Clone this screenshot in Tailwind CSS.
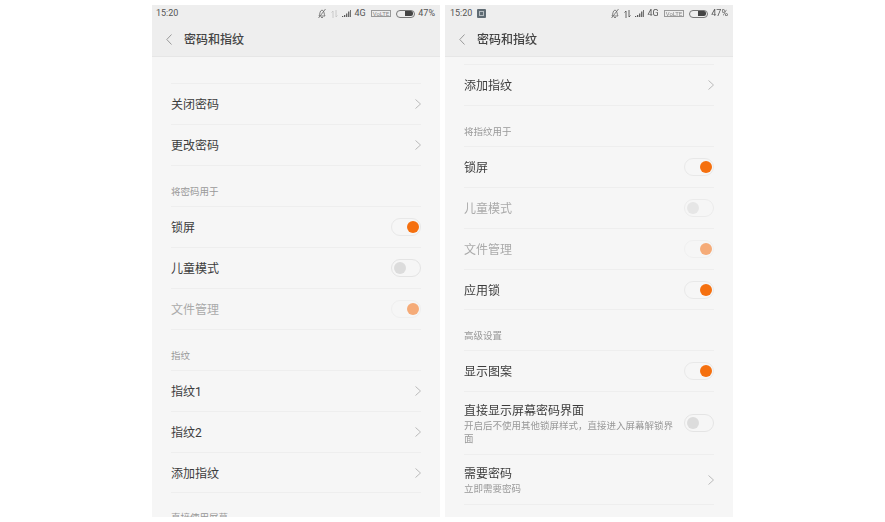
<!DOCTYPE html>
<html lang="en">
<head>
  <meta charset="UTF-8" />
  <meta name="viewport" content="width=device-width, initial-scale=1" />
  <title>密码和指纹</title>
  <script src="https://cdn.jsdelivr.net/npm/@tailwindcss/browser@4"></script>
</head>
<body class="bg-white text-[#3c3c3c] font-['Roboto','Noto_Sans_CJK_SC',sans-serif]">

<div class="w-[885px] h-[522px] overflow-hidden flex gap-[5px] pt-[5px] pl-[152px] blur-[0.35px]">

  <!-- Left phone -->
  <section class="w-[288px] h-[512px] overflow-hidden bg-[#f6f6f6] flex flex-col">
    <header class="h-[52px] shrink-0 bg-[#eeeeee] border-b border-[#e6e6e6]">
      <div class="h-[17px] pl-1 pr-[5px] flex items-center justify-between text-[9px] leading-none text-[#555]">
        <span>15:20</span>
        <div class="flex items-center gap-[5px]">
          <svg class="w-[10px] h-[11px] -mr-[1px] -ml-[1px]" viewBox="0 0 10 10" fill="none" stroke="#666" stroke-width="0.8"><path d="M2 7.5C3 6.5 2.5 2 5 1.5 7.5 2 7 6.5 8 7.5ZM4 9h2M1.5 9.5 8.5.5"/></svg>
          <svg class="w-[7px] h-[8px] -mr-[1px]" viewBox="0 0 7 8" fill="none" stroke="#c4c4c4" stroke-width="0.9"><path d="M2 8V1M.5 2.5 2 1M5 0v7M6.5 5.5 5 7"/></svg>
          <svg class="w-[9px] h-[7px] -mr-[1px]" viewBox="0 0 11 7" preserveAspectRatio="none" fill="#555"><path d="M0 6h1.5v1H0ZM2.5 5H4v2H2.5ZM5 3.500h1.500V7H5ZM7.500 1.500H9V7H7.500ZM10 0h1v7h-1Z"/></svg>
          <span>4G</span>
          <span class="h-[7px] px-px border-[0.5px] border-[#999] text-[6px] leading-[6px] text-[#888]">VoLTE</span>
          <div class="w-[19px] h-[8px] rounded-[4px] border border-[#777] flex justify-end items-center pr-px">
            <div class="w-[8px] h-[5px] rounded-r-[2px] bg-[#444]"></div>
          </div>
          <span class="-ml-[2px]">47%</span>
        </div>
      </div>
      <div class="h-[34px] flex items-center pl-[14px] gap-[12px]">
        <svg class="w-[6px] h-[11px]" viewBox="0 0 6 11" fill="none" stroke="#999" stroke-width="1"><path d="M5.500.5.800 5.500l4.700 5"/></svg>
        <h1 class="mt-[2px] text-[12px] leading-none font-medium text-[#444]">密码和指纹</h1>
      </div>
    </header>

    <div class="h-[26px] shrink-0"></div>
    <div class="mx-[19px] border-t border-[#eeeeee]">
      <div class="h-[41px] border-b border-[#eeeeee] flex items-center justify-between text-[12px]"><span class="mt-[2px]">关闭密码</span><svg class="w-[6px] h-[10px]" viewBox="0 0 6 10" fill="none" stroke="#bbb" stroke-width="1"><path d="m.5.500 5 4.500-5 4.500"/></svg></div>
      <div class="h-[41px] border-b border-[#eeeeee] flex items-center justify-between text-[12px]"><span class="mt-[2px]">更改密码</span><svg class="w-[6px] h-[10px]" viewBox="0 0 6 10" fill="none" stroke="#bbb" stroke-width="1"><path d="m.5.500 5 4.500-5 4.500"/></svg></div>
      <div class="h-[41px] border-b border-[#eeeeee] flex items-end pb-[10px] text-[9.500px] leading-none text-[#999]">将密码用于</div>
      <div class="h-[41px] border-b border-[#eeeeee] flex items-center justify-between text-[12px]">
        <span class="mt-[2px]">锁屏</span>
        <div class="w-[30px] h-[18px] rounded-full border border-[#e8e8e8] flex justify-end items-center pr-[1px]"><div class="w-[12px] h-[12px] rounded-full bg-[#f5700f]"></div></div>
      </div>
      <div class="h-[41px] border-b border-[#eeeeee] flex items-center justify-between text-[12px]">
        <span class="mt-[2px]">儿童模式</span>
        <div class="w-[30px] h-[18px] rounded-full border border-[#e4e4e4] flex items-center pl-[2px]"><div class="w-[12px] h-[12px] rounded-full bg-[#dcdcdc]"></div></div>
      </div>
      <div class="h-[41px] border-b border-[#eeeeee] flex items-center justify-between text-[12px] text-[#aaa]">
        <span class="mt-[2px]">文件管理</span>
        <div class="w-[30px] h-[18px] rounded-full border border-[#efefef] flex justify-end items-center pr-[1px]"><div class="w-[12px] h-[12px] rounded-full bg-[#f5ab78]"></div></div>
      </div>
      <div class="h-[41px] border-b border-[#eeeeee] flex items-end pb-[10px] text-[9.500px] leading-none text-[#999]">指纹</div>
      <div class="h-[41px] border-b border-[#eeeeee] flex items-center justify-between text-[12px]"><span class="mt-[2px]">指纹1</span><svg class="w-[6px] h-[10px]" viewBox="0 0 6 10" fill="none" stroke="#bbb" stroke-width="1"><path d="m.5.500 5 4.500-5 4.500"/></svg></div>
      <div class="h-[41px] border-b border-[#eeeeee] flex items-center justify-between text-[12px]"><span class="mt-[2px]">指纹2</span><svg class="w-[6px] h-[10px]" viewBox="0 0 6 10" fill="none" stroke="#bbb" stroke-width="1"><path d="m.5.500 5 4.500-5 4.500"/></svg></div>
      <div class="h-[40px] border-b border-[#eeeeee] flex items-center justify-between text-[12px]"><span class="mt-[2px]">添加指纹</span><svg class="w-[6px] h-[10px]" viewBox="0 0 6 10" fill="none" stroke="#bbb" stroke-width="1"><path d="m.5.500 5 4.500-5 4.500"/></svg></div>
      <div class="pt-[20px] text-[9.500px] leading-none text-[#999]">直接使用屏幕</div>
    </div>
  </section>

  <!-- Right phone -->
  <section class="w-[288px] h-[512px] overflow-hidden bg-[#f6f6f6] flex flex-col">
    <header class="h-[52px] shrink-0 bg-[#eeeeee] border-b border-[#e6e6e6]">
      <div class="h-[17px] pl-[5px] pr-[5px] flex items-center justify-between text-[9px] leading-none text-[#555]">
        <div class="flex items-center gap-[5px]">
          <span>15:20</span>
          <div class="w-[9px] h-[9px] rounded-[1px] bg-[#5f6b73] flex items-center justify-center"><div class="w-[5px] h-[5px] border border-[#b5bcc0]"></div></div>
        </div>
        <div class="flex items-center gap-[5px]">
          <svg class="w-[10px] h-[11px] -mr-[1px] -ml-[1px]" viewBox="0 0 10 10" fill="none" stroke="#666" stroke-width="0.8"><path d="M2 7.5C3 6.5 2.5 2 5 1.5 7.5 2 7 6.5 8 7.5ZM4 9h2M1.5 9.5 8.5.5"/></svg>
          <svg class="w-[7px] h-[8px] -mr-[1px]" viewBox="0 0 7 8" fill="none" stroke="#555" stroke-width="0.9"><path d="M2 8V1M.5 2.5 2 1M5 0v7M6.5 5.5 5 7"/></svg>
          <svg class="w-[9px] h-[7px] -mr-[1px]" viewBox="0 0 11 7" preserveAspectRatio="none" fill="#555"><path d="M0 6h1.5v1H0ZM2.5 5H4v2H2.5ZM5 3.500h1.500V7H5ZM7.500 1.500H9V7H7.500ZM10 0h1v7h-1Z"/></svg>
          <span>4G</span>
          <span class="h-[7px] px-px border-[0.5px] border-[#999] text-[6px] leading-[6px] text-[#888]">VoLTE</span>
          <div class="w-[19px] h-[8px] rounded-[4px] border border-[#777] flex justify-end items-center pr-px">
            <div class="w-[8px] h-[5px] rounded-r-[2px] bg-[#444]"></div>
          </div>
          <span class="-ml-[2px]">47%</span>
        </div>
      </div>
      <div class="h-[34px] flex items-center pl-[14px] gap-[12px]">
        <svg class="w-[6px] h-[11px]" viewBox="0 0 6 11" fill="none" stroke="#999" stroke-width="1"><path d="M5.500.5.800 5.500l4.700 5"/></svg>
        <h1 class="mt-[2px] text-[12px] leading-none font-medium text-[#444]">密码和指纹</h1>
      </div>
    </header>

    <div class="h-[7px] shrink-0"></div>
    <div class="mx-[19px] border-t border-[#eeeeee]">
      <div class="h-[41px] border-b border-[#eeeeee] flex items-center justify-between text-[12px]"><span class="mt-[2px]">添加指纹</span><svg class="w-[6px] h-[10px]" viewBox="0 0 6 10" fill="none" stroke="#bbb" stroke-width="1"><path d="m.5.500 5 4.500-5 4.500"/></svg></div>
      <div class="h-[41px] border-b border-[#eeeeee] flex items-end pb-[10px] text-[9.500px] leading-none text-[#999]">将指纹用于</div>
      <div class="h-[41px] border-b border-[#eeeeee] flex items-center justify-between text-[12px]">
        <span class="mt-[2px]">锁屏</span>
        <div class="w-[30px] h-[18px] rounded-full border border-[#e8e8e8] flex justify-end items-center pr-[1px]"><div class="w-[12px] h-[12px] rounded-full bg-[#f5700f]"></div></div>
      </div>
      <div class="h-[41px] border-b border-[#eeeeee] flex items-center justify-between text-[12px] text-[#aaa]">
        <span class="mt-[2px]">儿童模式</span>
        <div class="w-[30px] h-[18px] rounded-full border border-[#ebebeb] flex items-center pl-[2px]"><div class="w-[12px] h-[12px] rounded-full bg-[#e6e6e6]"></div></div>
      </div>
      <div class="h-[41px] border-b border-[#eeeeee] flex items-center justify-between text-[12px] text-[#aaa]">
        <span class="mt-[2px]">文件管理</span>
        <div class="w-[30px] h-[18px] rounded-full border border-[#efefef] flex justify-end items-center pr-[1px]"><div class="w-[12px] h-[12px] rounded-full bg-[#f5ab78]"></div></div>
      </div>
      <div class="h-[40px] border-b border-[#eeeeee] flex items-center justify-between text-[12px]">
        <span class="mt-[2px]">应用锁</span>
        <div class="w-[30px] h-[18px] rounded-full border border-[#e8e8e8] flex justify-end items-center pr-[1px]"><div class="w-[12px] h-[12px] rounded-full bg-[#f5700f]"></div></div>
      </div>
      <div class="h-[41px] border-b border-[#eeeeee] flex items-end pb-[10px] text-[9.500px] leading-none text-[#999]">高级设置</div>
      <div class="h-[41px] border-b border-[#eeeeee] flex items-center justify-between text-[12px]">
        <span class="mt-[2px]">显示图案</span>
        <div class="w-[30px] h-[18px] rounded-full border border-[#e8e8e8] flex justify-end items-center pr-[1px]"><div class="w-[12px] h-[12px] rounded-full bg-[#f5700f]"></div></div>
      </div>
      <div class="h-[63px] border-b border-[#eeeeee] flex items-center justify-between">
        <div class="w-[212px] mt-[2px]">
          <p class="text-[12px] leading-[15px]">直接显示屏幕密码界面</p>
          <p class="text-[9.500px] leading-[13px] text-[#999]">开启后不使用其他锁屏样式，直接进入屏幕解锁界面</p>
        </div>
        <div class="w-[30px] h-[18px] rounded-full border border-[#e4e4e4] flex items-center pl-[2px]"><div class="w-[12px] h-[12px] rounded-full bg-[#dcdcdc]"></div></div>
      </div>
      <div class="h-[50px] border-b border-[#eeeeee] flex items-center justify-between">
        <div class="mt-[2px]">
          <p class="text-[12px] leading-[15px]">需要密码</p>
          <p class="text-[9.500px] leading-[13px] text-[#999]">立即需要密码</p>
        </div>
        <svg class="w-[6px] h-[10px]" viewBox="0 0 6 10" fill="none" stroke="#bbb" stroke-width="1"><path d="m.5.500 5 4.500-5 4.500"/></svg>
      </div>
    </div>
  </section>

</div>

</body>
</html>
